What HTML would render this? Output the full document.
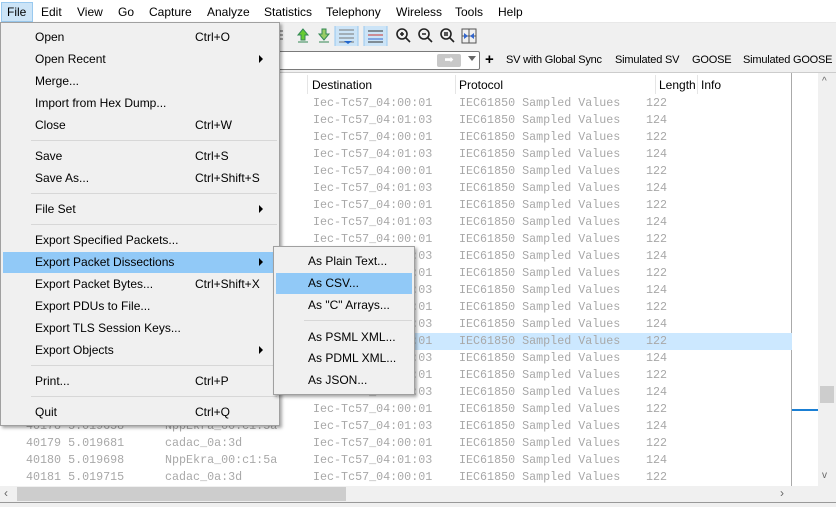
<!DOCTYPE html><html><head><meta charset="utf-8"><style>
*{margin:0;padding:0;box-sizing:border-box}
body{width:836px;height:507px;overflow:hidden;background:#fff;font-family:"Liberation Sans",sans-serif;font-size:12px;color:#000;position:relative}
.a{position:absolute;white-space:nowrap}
.mb{left:0;top:0;width:836px;height:23px;background:#fff;border-bottom:1px solid #e8e8e8}
.mb span{position:absolute;top:5px}
.tb{left:0;top:23px;width:836px;height:26px;background:#f0f0f0}
.fb{left:0;top:49px;width:836px;height:24px;background:#f0f0f0;border-bottom:1px solid #ccc}
.fb span{font-size:11px;letter-spacing:-0.2px}
.row{position:absolute;left:0;width:792px;height:17px;font-family:"Liberation Mono",monospace;font-size:11.7px;color:#a8a8a8}
.row span{position:absolute;top:1px}
.menu{background:#f0f0f0;border:1px solid #a0a0a0;box-shadow:2px 2px 3px rgba(0,0,0,.35)}
.mi{position:absolute;left:2px;right:2px;height:21px}
.mi .t{position:absolute;left:32px;top:3px}
.mi .k{position:absolute;left:192px;top:3px}
.mi .ar{position:absolute;right:14px;top:6px;width:0;height:0;border-left:4px solid #000;border-top:4px solid transparent;border-bottom:4px solid transparent}
.sep{position:absolute;left:30px;right:2px;height:1px;background:#d7d7d7}
.hl{background:#91c9f7}
</style></head><body>
<div class="a mb">
<div class="a" style="left:1px;top:2px;width:32px;height:20px;background:#cce4f7;border:1px solid #99c9ef"></div>
<span style="left:7px">File</span><span style="left:41px">Edit</span><span style="left:77px">View</span><span style="left:118px">Go</span><span style="left:149px">Capture</span><span style="left:207px">Analyze</span><span style="left:264px">Statistics</span><span style="left:326px">Telephony</span><span style="left:396px">Wireless</span><span style="left:455px">Tools</span><span style="left:498px">Help</span>
</div>
<div class="a tb">
<svg class="a" style="left:278px;top:3px" width="220" height="20">
<g stroke="#555" fill="none"><path d="M0 5h5M0 9h5M0 13h5"/></g>
<path d="M20 16h10M25 3l-5 6h3v5h4v-5h3z" fill="#6c3" stroke="#385"/>
<path d="M41 16h10M46 14l-5-6h3V3h4v5h3z" fill="#9c6" stroke="#385"/>
<rect x="57" y="-1" width="23" height="22" fill="#cce4f7" stroke="#99c9ef"/>
<path d="M61 4h15M61 8h15M61 12h15M61 16h15" stroke="#777"/><path d="M66 15h8l-4 3z" fill="#26c"/>
<rect x="86" y="-1" width="23" height="22" fill="#cce4f7" stroke="#99c9ef"/>
<path d="M90 5h15M90 9h15M90 13h15M90 16h15" stroke="#333"/><path d="M90 9h15" stroke="#c33"/><path d="M90 13h15" stroke="#36c"/>
<g stroke="#222" stroke-width="1.6" fill="none"><circle cx="124" cy="8" r="5"/><path d="M128 12l4 4M122 8h4M124 6v4"/><circle cx="146" cy="8" r="5"/><path d="M150 12l4 4M144 8h4"/><circle cx="168" cy="8" r="5"/><path d="M172 12l4 4M166 7h4M166 9h4"/></g>
<path d="M184 3h14v14h-14zM184 10h14M191 3v14" stroke="#555" fill="none"/><path d="M186 7l4 3-4 3zM196 7l-4 3 4 3z" fill="#36c"/>
</svg>
</div>
<div class="a fb">
<div class="a" style="left:270px;top:2px;width:210px;height:19px;background:#fff;border:1px solid #7a7a7a;border-radius:2px"></div>
<div class="a" style="left:437px;top:5px;width:24px;height:13px;background:#c8c8c8;border-radius:2px;color:#fff;font-size:11px;text-align:center;line-height:13px">➡</div>
<div class="a" style="left:468px;top:7px;border-left:4px solid transparent;border-right:4px solid transparent;border-top:5px solid #666"></div>
<div class="a" style="left:485px;top:2px;font-size:15px;font-weight:bold">+</div>
<span class="a" style="left:506px;top:5px">SV with Global Sync</span>
<span class="a" style="left:615px;top:5px">Simulated SV</span>
<span class="a" style="left:692px;top:5px">GOOSE</span>
<span class="a" style="left:743px;top:5px">Simulated GOOSE</span>
</div>
<div class="a" style="left:0;top:75px;width:792px;height:19px;background:#fff">
<span class="a" style="left:312px;top:3px">Destination</span><div class="a" style="left:455px;top:0;width:1px;height:19px;background:#e5e5e5"></div>
<span class="a" style="left:459px;top:3px">Protocol</span><div class="a" style="left:655px;top:0;width:1px;height:19px;background:#e5e5e5"></div>
<span class="a" style="left:659px;top:3px">Length</span><div class="a" style="left:697px;top:0;width:1px;height:19px;background:#e5e5e5"></div>
<span class="a" style="left:701px;top:3px">Info</span><div class="a" style="left:307px;top:0;width:1px;height:19px;background:#e5e5e5"></div>
</div>
<div class="a" style="left:791px;top:73px;width:1px;height:413px;background:#aaa"></div>
<div class="a" style="left:818px;top:73px;width:18px;height:413px;background:#f0f0f0"></div>
<div class="a" style="left:820px;top:386px;width:14px;height:17px;background:#cdcdcd"></div>
<div class="a" style="left:792px;top:409px;width:26px;height:2px;background:#1a7fd4"></div>
<div class="a" style="left:822px;top:76px;font-size:10px;color:#666">^</div>
<div class="a" style="left:822px;top:470px;font-size:10px;color:#666">v</div>
<div id="rows"></div>
<div class="a" style="left:0;top:486px;width:836px;height:16px;background:#f0f0f0"></div>
<div class="a" style="left:17px;top:487px;width:329px;height:14px;background:#cdcdcd"></div>
<div class="a" style="left:4px;top:486px;color:#666">‹</div><div class="a" style="left:780px;top:486px;color:#666">›</div>
<div class="a" style="left:0;top:502px;width:836px;height:5px;background:#f0f0f0;border-top:1px solid #999"></div>

<div class="a menu" style="left:0;top:22px;width:280px;height:404px">
<div class="mi" style="top:4px"><span class="t">Open</span><span class="k">Ctrl+O</span></div>
<div class="mi" style="top:26px"><span class="t">Open Recent</span><i class="ar"></i></div>
<div class="mi" style="top:48px"><span class="t">Merge...</span></div>
<div class="mi" style="top:70px"><span class="t">Import from Hex Dump...</span></div>
<div class="mi" style="top:92px"><span class="t">Close</span><span class="k">Ctrl+W</span></div>
<div class="sep" style="top:117px"></div>
<div class="mi" style="top:123px"><span class="t">Save</span><span class="k">Ctrl+S</span></div>
<div class="mi" style="top:145px"><span class="t">Save As...</span><span class="k">Ctrl+Shift+S</span></div>
<div class="sep" style="top:170px"></div>
<div class="mi" style="top:176px"><span class="t">File Set</span><i class="ar"></i></div>
<div class="sep" style="top:201px"></div>
<div class="mi" style="top:207px"><span class="t">Export Specified Packets...</span></div>
<div class="mi hl" style="top:229px"><span class="t">Export Packet Dissections</span><i class="ar"></i></div>
<div class="mi" style="top:251px"><span class="t">Export Packet Bytes...</span><span class="k">Ctrl+Shift+X</span></div>
<div class="mi" style="top:273px"><span class="t">Export PDUs to File...</span></div>
<div class="mi" style="top:295px"><span class="t">Export TLS Session Keys...</span></div>
<div class="mi" style="top:317px"><span class="t">Export Objects</span><i class="ar"></i></div>
<div class="sep" style="top:342px"></div>
<div class="mi" style="top:348px"><span class="t">Print...</span><span class="k">Ctrl+P</span></div>
<div class="sep" style="top:373px"></div>
<div class="mi" style="top:379px"><span class="t">Quit</span><span class="k">Ctrl+Q</span></div>
</div>
<div class="a menu" style="left:273px;top:246px;width:142px;height:149px">
<div class="mi" style="top:4px"><span class="t">As Plain Text...</span></div>
<div class="mi hl" style="top:26px"><span class="t">As CSV...</span></div>
<div class="mi" style="top:48px"><span class="t">As "C" Arrays...</span></div>
<div class="sep" style="top:73px"></div>
<div class="mi" style="top:80px"><span class="t">As PSML XML...</span></div>
<div class="mi" style="top:101px"><span class="t">As PDML XML...</span></div>
<div class="mi" style="top:123px"><span class="t">As JSON...</span></div>
</div>
<script>
var h='';var ts=['5.019658','5.019681','5.019698','5.019715'];for(var i=0;i<23;i++){var n=40159+i,o=n%2==1,t=i>=19?ts[i-19]:(5.019658-(19-i)*0.0000195).toFixed(6);
h+='<div class="row" style="top:'+(95+i*17)+'px;'+(n==40173?'background:#cce8ff':'')+'"><span style="left:26px">'+n+' '+t+'</span><span style="left:165px">'+(o?'cadac_0a:3d':'NppEkra_00:c1:5a')+'</span><span style="left:313px">Iec-Tc57_04:0'+(o?'0:01':'1:03')+'</span><span style="left:459px">IEC61850 Sampled Values</span><span style="left:646px">'+(o?'122':'124')+'</span></div>';}
document.getElementById('rows').outerHTML=h;
</script>
</body></html>
